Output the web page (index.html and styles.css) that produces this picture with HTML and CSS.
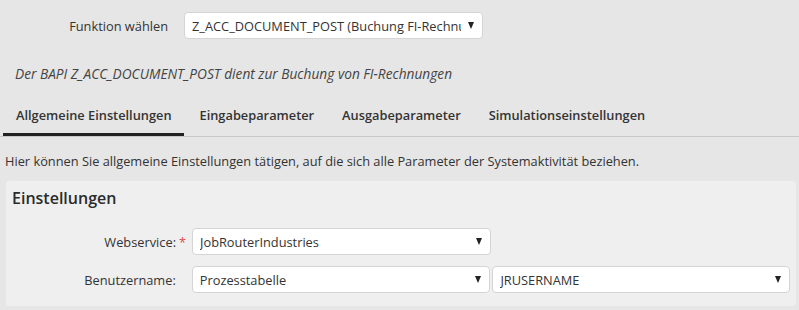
FILE: index.html
```html
<!DOCTYPE html>
<html lang="de">
<head>
<meta charset="utf-8">
<title>Systemaktivität</title>
<link rel="stylesheet" href="styles.css">
</head>
<body>
<div class="page">
  <div class="func-row">
    <label class="func-label">Funktion wählen</label>
    <div class="select func-select"><span class="select-text">Z_ACC_DOCUMENT_POST (Buchung FI-Rechnungen)</span><span class="arrow"></span></div>
  </div>
  <p class="desc">Der BAPI Z_ACC_DOCUMENT_POST dient zur Buchung von FI-Rechnungen</p>
  <div class="tabs">
    <div class="tab active">Allgemeine Einstellungen</div>
    <div class="tab">Eingabeparameter</div>
    <div class="tab">Ausgabeparameter</div>
    <div class="tab">Simulationseinstellungen</div>
  </div>
  <p class="intro">Hier können Sie allgemeine Einstellungen tätigen, auf die sich alle Parameter der Systemaktivität beziehen.</p>
  <div class="panel">
    <h2 class="panel-title">Einstellungen</h2>
    <div class="form">
      <div class="form-row">
        <label class="form-label">Webservice:<span class="req">*</span></label>
        <div class="select sel-main"><span class="select-text">JobRouterIndustries</span><span class="arrow"></span></div>
      </div>
      <div class="form-row">
        <label class="form-label">Benutzername:<span class="req-space"></span></label>
        <div class="select sel-main"><span class="select-text">Prozesstabelle</span><span class="arrow"></span></div>
        <div class="select sel-second"><span class="select-text">JRUSERNAME</span><span class="arrow"></span></div>
      </div>
    </div>
  </div>
</div>
</body>
</html>
```

FILE: styles.css
```css
html, body {
  margin: 0;
  padding: 0;
  background: #e6e6e6;
}
body {
  font-family: "Open Sans", "Liberation Sans", sans-serif;
  font-size: 12.8px;
  color: #333;
}
.page {
  padding-top: 12px;
}
.func-row {
  display: flex;
  align-items: center;
}
.func-label {
  width: 168px;
  text-align: right;
  margin-right: 16px;
  color: #333;
}
.select {
  box-sizing: border-box;
  height: 27px;
  background: #fff;
  border: 1px solid #d4d4d4;
  border-radius: 4px;
  display: flex;
  align-items: center;
  padding: 0 8px 0 7px;
  overflow: hidden;
}
.select-text {
  flex: 1;
  white-space: nowrap;
  overflow: hidden;
  color: #333;
}
.arrow {
  flex: none;
  width: 0;
  height: 0;
  border-left: 3.5px solid transparent;
  border-right: 3.5px solid transparent;
  border-top: 7px solid #222;
  margin-left: 6px;
}
.func-select {
  width: 299px;
}
.func-select .select-text {
  margin-right: 1px;
}
.desc {
  margin: 26px 0 0 15px;
  font-style: italic;
  font-size: 13.7px;
  line-height: 18px;
  color: #444;
}
.tabs {
  display: flex;
  margin-top: 21px;
  border-bottom: 1px solid #c8c8c8;
  padding-left: 3px;
}
.tab {
  box-sizing: border-box;
  height: 32px;
  line-height: 23px;
  padding: 0 12px 0 13px;
  margin-right: 3px;
  font-weight: 600;
  color: #333;
  border-bottom: 3px solid transparent;
}
.tab.active {
  border-bottom-color: #222;
}
.intro {
  margin: 15px 0 0 5px;
  line-height: 18px;
}
.panel {
  margin: 11px 3px 0 6px;
  background: #efefef;
  border-radius: 3px;
  padding: 6px 6px 13px 6px;
}
.panel-title {
  margin: 0;
  font-size: 16px;
  font-weight: 600;
  line-height: 22px;
  color: #2b2b2b;
}
.form {
  margin-top: 19px;
  display: flex;
  flex-direction: column;
  gap: 11px;
}
.form-row {
  display: flex;
  align-items: center;
}
.form-label {
  width: 174px;
  text-align: right;
  margin-right: 6px;
  color: #333;
}
.req {
  color: #e04b4b;
  display: inline-block;
  width: 10px;
  text-align: right;
}
.req-space {
  display: inline-block;
  width: 10px;
}
.sel-main {
  width: 299px;
}
.sel-second {
  width: 298px;
  margin-left: 2px;
}
```
